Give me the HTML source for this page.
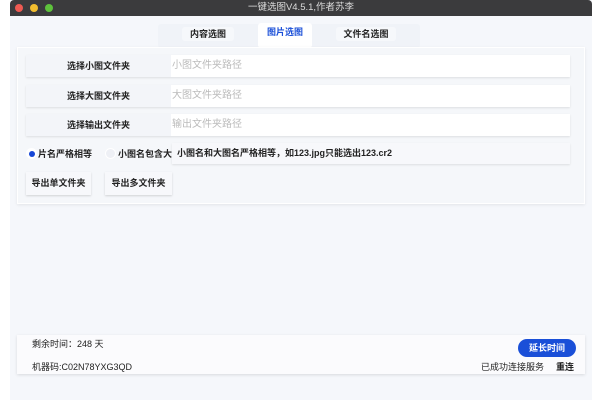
<!DOCTYPE html><html><head><meta charset="utf-8"><style>
*{margin:0;padding:0;box-sizing:border-box}
body{width:600px;height:400px;background:#fff;font-family:"Liberation Sans","Noto Sans CJK SC",sans-serif;font-size:9px;color:#222;position:relative;overflow:hidden}
.win{position:absolute;left:10px;top:0;width:582px;height:400px;background:#f5f7fb}
.title{position:absolute;left:10px;top:0;width:582px;height:16px;background:#3b3b3d;border-radius:4px 4px 0 0;color:#ddd;text-align:center;line-height:16px;font-size:9.5px}
.dot{position:absolute;top:4px;width:8px;height:8px;border-radius:50%}
.abs{position:absolute}
.tabbar{left:158px;top:24px;width:262px;height:24px;background:#f0f3f8;border-radius:3px}
.tab{position:absolute;text-align:center;font-size:9px;line-height:14px;border-radius:3px}
.panel{left:17px;top:47px;width:568px;height:157px;background:#f5f7fa;border:1px solid #fff;box-shadow:0 1px 3px rgba(0,0,0,.08)}
.row{position:absolute;left:26px;width:544px;height:22px;background:#fff;box-shadow:0 1px 2px rgba(0,0,0,.1)}
.lab{position:absolute;left:0;top:0;width:145px;height:22px;background:#f3f5f9;text-align:center;line-height:22px;font-weight:bold;font-size:9px}
.ph{position:absolute;left:145px;top:0;line-height:22px;color:#bbb;padding-left:1px;font-size:10px}
.btn{position:absolute;top:172px;height:23px;background:#f7f8fb;box-shadow:0 1px 2px rgba(0,0,0,.15);text-align:center;line-height:23px;font-weight:bold;font-size:9px}
</style></head><body>
<div class="win"></div>
<div class="title">一键选图V4.5.1,作者苏李</div>
<div class="dot" style="left:15px;background:#ee5a52"></div>
<div class="dot" style="left:30px;background:#f2be2f"></div>
<div class="dot" style="left:45px;background:#5ec23c"></div>
<div class="abs tabbar"></div>
<div class="tab" style="left:182px;top:27px;width:52px;background:#f6f8fb;font-weight:bold">内容选图</div>
<div class="tab" style="left:258px;top:23px;width:54px;height:25px;background:#fff;color:#1a4fd8;font-weight:bold;line-height:18px">图片选图</div>
<div class="tab" style="left:336px;top:27px;width:60px;background:#f6f8fb;font-weight:bold">文件名选图</div>
<div class="abs panel"></div>
<div class="row" style="top:55px"><div class="lab">选择小图文件夹</div><div class="ph">小图文件夹路径</div></div>
<div class="row" style="top:85px"><div class="lab">选择大图文件夹</div><div class="ph">大图文件夹路径</div></div>
<div class="row" style="top:114px"><div class="lab">选择输出文件夹</div><div class="ph">输出文件夹路径</div></div>
<div class="abs" style="left:26px;top:148px;width:11px;height:11px;border-radius:50%;background:#fff"><div style="position:absolute;left:3px;top:3px;width:6px;height:6px;border-radius:50%;background:#1546d6"></div></div>
<div class="abs" style="left:38px;top:147px;line-height:14px;font-weight:bold">片名严格相等</div>
<div class="abs" style="left:105px;top:148px;width:11px;height:11px;border-radius:50%;background:#eef0f5;border:1px solid #fff"></div>
<div class="abs" style="left:118px;top:147px;line-height:14px;font-weight:bold;width:54px;overflow:hidden;white-space:nowrap">小图名包含大</div>
<div class="abs" style="left:172px;top:143px;width:398px;height:21px;background:#f7f8fb;box-shadow:0 1px 2px rgba(0,0,0,.1);line-height:21px;padding-left:5px;font-weight:bold">小图名和大图名严格相等，如123.jpg只能选出123.cr2</div>
<div class="btn" style="left:26px;width:65px">导出单文件夹</div>
<div class="btn" style="left:105px;width:67px">导出多文件夹</div>
<div class="abs" style="left:17px;top:335px;width:568px;height:39px;background:#fbfbfd;box-shadow:0 1px 3px rgba(0,0,0,.12)"></div>
<div class="abs" style="left:32px;top:338px;line-height:12px">剩余时间：248 天</div>
<div class="abs" style="left:32px;top:361px;line-height:12px">机器码:C02N78YXG3QD</div>
<div class="abs" style="left:518px;top:339px;width:58px;height:18px;border-radius:9px;background:#1a4fd8;color:#fff;text-align:center;line-height:18px;font-weight:bold">延长时间</div>
<div class="abs" style="left:481px;top:361px;line-height:12px">已成功连接服务</div>
<div class="abs" style="left:556px;top:361px;line-height:12px;font-weight:bold">重连</div>
</body></html>
